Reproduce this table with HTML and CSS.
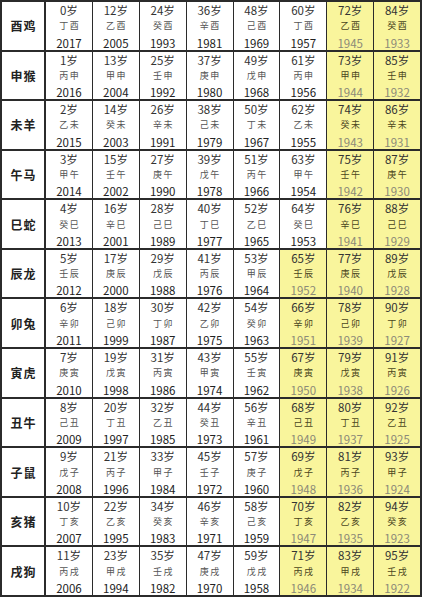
FILE: index.html
```html
<!DOCTYPE html>
<html lang="zh">
<head>
<meta charset="utf-8">
<link rel="stylesheet" href="styles.css">
</head>
<body>
<div class="table">
  <div class="lab">酉鸡</div>
  <div class="c"><span class="a">0岁</span><span class="g">丁酉</span><span class="y">2017</span></div>
  <div class="c"><span class="a">12岁</span><span class="g">乙酉</span><span class="y">2005</span></div>
  <div class="c"><span class="a">24岁</span><span class="g">癸酉</span><span class="y">1993</span></div>
  <div class="c"><span class="a">36岁</span><span class="g">辛酉</span><span class="y">1981</span></div>
  <div class="c"><span class="a">48岁</span><span class="g">己酉</span><span class="y">1969</span></div>
  <div class="c"><span class="a">60岁</span><span class="g">丁酉</span><span class="y">1957</span></div>
  <div class="c hl"><span class="a">72岁</span><span class="g">乙酉</span><span class="y">1945</span></div>
  <div class="c hl"><span class="a">84岁</span><span class="g">癸酉</span><span class="y">1933</span></div>

  <div class="lab">申猴</div>
  <div class="c"><span class="a">1岁</span><span class="g">丙申</span><span class="y">2016</span></div>
  <div class="c"><span class="a">13岁</span><span class="g">甲申</span><span class="y">2004</span></div>
  <div class="c"><span class="a">25岁</span><span class="g">壬申</span><span class="y">1992</span></div>
  <div class="c"><span class="a">37岁</span><span class="g">庚申</span><span class="y">1980</span></div>
  <div class="c"><span class="a">49岁</span><span class="g">戊申</span><span class="y">1968</span></div>
  <div class="c"><span class="a">61岁</span><span class="g">丙申</span><span class="y">1956</span></div>
  <div class="c hl"><span class="a">73岁</span><span class="g">甲申</span><span class="y">1944</span></div>
  <div class="c hl"><span class="a">85岁</span><span class="g">壬申</span><span class="y">1932</span></div>

  <div class="lab">未羊</div>
  <div class="c"><span class="a">2岁</span><span class="g">乙未</span><span class="y">2015</span></div>
  <div class="c"><span class="a">14岁</span><span class="g">癸未</span><span class="y">2003</span></div>
  <div class="c"><span class="a">26岁</span><span class="g">辛未</span><span class="y">1991</span></div>
  <div class="c"><span class="a">38岁</span><span class="g">己未</span><span class="y">1979</span></div>
  <div class="c"><span class="a">50岁</span><span class="g">丁未</span><span class="y">1967</span></div>
  <div class="c"><span class="a">62岁</span><span class="g">乙未</span><span class="y">1955</span></div>
  <div class="c hl"><span class="a">74岁</span><span class="g">癸未</span><span class="y">1943</span></div>
  <div class="c hl"><span class="a">86岁</span><span class="g">辛未</span><span class="y">1931</span></div>

  <div class="lab">午马</div>
  <div class="c"><span class="a">3岁</span><span class="g">甲午</span><span class="y">2014</span></div>
  <div class="c"><span class="a">15岁</span><span class="g">壬午</span><span class="y">2002</span></div>
  <div class="c"><span class="a">27岁</span><span class="g">庚午</span><span class="y">1990</span></div>
  <div class="c"><span class="a">39岁</span><span class="g">戊午</span><span class="y">1978</span></div>
  <div class="c"><span class="a">51岁</span><span class="g">丙午</span><span class="y">1966</span></div>
  <div class="c"><span class="a">63岁</span><span class="g">甲午</span><span class="y">1954</span></div>
  <div class="c hl"><span class="a">75岁</span><span class="g">壬午</span><span class="y">1942</span></div>
  <div class="c hl"><span class="a">87岁</span><span class="g">庚午</span><span class="y">1930</span></div>

  <div class="lab">巳蛇</div>
  <div class="c"><span class="a">4岁</span><span class="g">癸巳</span><span class="y">2013</span></div>
  <div class="c"><span class="a">16岁</span><span class="g">辛巳</span><span class="y">2001</span></div>
  <div class="c"><span class="a">28岁</span><span class="g">己巳</span><span class="y">1989</span></div>
  <div class="c"><span class="a">40岁</span><span class="g">丁巳</span><span class="y">1977</span></div>
  <div class="c"><span class="a">52岁</span><span class="g">乙巳</span><span class="y">1965</span></div>
  <div class="c"><span class="a">64岁</span><span class="g">癸巳</span><span class="y">1953</span></div>
  <div class="c hl"><span class="a">76岁</span><span class="g">辛巳</span><span class="y">1941</span></div>
  <div class="c hl"><span class="a">88岁</span><span class="g">己巳</span><span class="y">1929</span></div>

  <div class="lab">辰龙</div>
  <div class="c"><span class="a">5岁</span><span class="g">壬辰</span><span class="y">2012</span></div>
  <div class="c"><span class="a">17岁</span><span class="g">庚辰</span><span class="y">2000</span></div>
  <div class="c"><span class="a">29岁</span><span class="g">戊辰</span><span class="y">1988</span></div>
  <div class="c"><span class="a">41岁</span><span class="g">丙辰</span><span class="y">1976</span></div>
  <div class="c"><span class="a">53岁</span><span class="g">甲辰</span><span class="y">1964</span></div>
  <div class="c hl"><span class="a">65岁</span><span class="g">壬辰</span><span class="y">1952</span></div>
  <div class="c hl"><span class="a">77岁</span><span class="g">庚辰</span><span class="y">1940</span></div>
  <div class="c hl"><span class="a">89岁</span><span class="g">戊辰</span><span class="y">1928</span></div>

  <div class="lab">卯兔</div>
  <div class="c"><span class="a">6岁</span><span class="g">辛卯</span><span class="y">2011</span></div>
  <div class="c"><span class="a">18岁</span><span class="g">己卯</span><span class="y">1999</span></div>
  <div class="c"><span class="a">30岁</span><span class="g">丁卯</span><span class="y">1987</span></div>
  <div class="c"><span class="a">42岁</span><span class="g">乙卯</span><span class="y">1975</span></div>
  <div class="c"><span class="a">54岁</span><span class="g">癸卯</span><span class="y">1963</span></div>
  <div class="c hl"><span class="a">66岁</span><span class="g">辛卯</span><span class="y">1951</span></div>
  <div class="c hl"><span class="a">78岁</span><span class="g">己卯</span><span class="y">1939</span></div>
  <div class="c hl"><span class="a">90岁</span><span class="g">丁卯</span><span class="y">1927</span></div>

  <div class="lab">寅虎</div>
  <div class="c"><span class="a">7岁</span><span class="g">庚寅</span><span class="y">2010</span></div>
  <div class="c"><span class="a">19岁</span><span class="g">戊寅</span><span class="y">1998</span></div>
  <div class="c"><span class="a">31岁</span><span class="g">丙寅</span><span class="y">1986</span></div>
  <div class="c"><span class="a">43岁</span><span class="g">甲寅</span><span class="y">1974</span></div>
  <div class="c"><span class="a">55岁</span><span class="g">壬寅</span><span class="y">1962</span></div>
  <div class="c hl"><span class="a">67岁</span><span class="g">庚寅</span><span class="y">1950</span></div>
  <div class="c hl"><span class="a">79岁</span><span class="g">戊寅</span><span class="y">1938</span></div>
  <div class="c hl"><span class="a">91岁</span><span class="g">丙寅</span><span class="y">1926</span></div>

  <div class="lab">丑牛</div>
  <div class="c"><span class="a">8岁</span><span class="g">己丑</span><span class="y">2009</span></div>
  <div class="c"><span class="a">20岁</span><span class="g">丁丑</span><span class="y">1997</span></div>
  <div class="c"><span class="a">32岁</span><span class="g">乙丑</span><span class="y">1985</span></div>
  <div class="c"><span class="a">44岁</span><span class="g">癸丑</span><span class="y">1973</span></div>
  <div class="c"><span class="a">56岁</span><span class="g">辛丑</span><span class="y">1961</span></div>
  <div class="c hl"><span class="a">68岁</span><span class="g">己丑</span><span class="y">1949</span></div>
  <div class="c hl"><span class="a">80岁</span><span class="g">丁丑</span><span class="y">1937</span></div>
  <div class="c hl"><span class="a">92岁</span><span class="g">乙丑</span><span class="y">1925</span></div>

  <div class="lab">子鼠</div>
  <div class="c"><span class="a">9岁</span><span class="g">戊子</span><span class="y">2008</span></div>
  <div class="c"><span class="a">21岁</span><span class="g">丙子</span><span class="y">1996</span></div>
  <div class="c"><span class="a">33岁</span><span class="g">甲子</span><span class="y">1984</span></div>
  <div class="c"><span class="a">45岁</span><span class="g">壬子</span><span class="y">1972</span></div>
  <div class="c"><span class="a">57岁</span><span class="g">庚子</span><span class="y">1960</span></div>
  <div class="c hl"><span class="a">69岁</span><span class="g">戊子</span><span class="y">1948</span></div>
  <div class="c hl"><span class="a">81岁</span><span class="g">丙子</span><span class="y">1936</span></div>
  <div class="c hl"><span class="a">93岁</span><span class="g">甲子</span><span class="y">1924</span></div>

  <div class="lab">亥猪</div>
  <div class="c"><span class="a">10岁</span><span class="g">丁亥</span><span class="y">2007</span></div>
  <div class="c"><span class="a">22岁</span><span class="g">乙亥</span><span class="y">1995</span></div>
  <div class="c"><span class="a">34岁</span><span class="g">癸亥</span><span class="y">1983</span></div>
  <div class="c"><span class="a">46岁</span><span class="g">辛亥</span><span class="y">1971</span></div>
  <div class="c"><span class="a">58岁</span><span class="g">己亥</span><span class="y">1959</span></div>
  <div class="c hl"><span class="a">70岁</span><span class="g">丁亥</span><span class="y">1947</span></div>
  <div class="c hl"><span class="a">82岁</span><span class="g">乙亥</span><span class="y">1935</span></div>
  <div class="c hl"><span class="a">94岁</span><span class="g">癸亥</span><span class="y">1923</span></div>

  <div class="lab">戌狗</div>
  <div class="c"><span class="a">11岁</span><span class="g">丙戌</span><span class="y">2006</span></div>
  <div class="c"><span class="a">23岁</span><span class="g">甲戌</span><span class="y">1994</span></div>
  <div class="c"><span class="a">35岁</span><span class="g">壬戌</span><span class="y">1982</span></div>
  <div class="c"><span class="a">47岁</span><span class="g">庚戌</span><span class="y">1970</span></div>
  <div class="c"><span class="a">59岁</span><span class="g">戊戌</span><span class="y">1958</span></div>
  <div class="c hl"><span class="a">71岁</span><span class="g">丙戌</span><span class="y">1946</span></div>
  <div class="c hl"><span class="a">83岁</span><span class="g">甲戌</span><span class="y">1934</span></div>
  <div class="c hl"><span class="a">95岁</span><span class="g">壬戌</span><span class="y">1922</span></div>
</div>
</body>
</html>
```

FILE: styles.css
```css
html, body {
  margin: 0;
  padding: 0;
  background: #ffffff;
}

body {
  width: 425px;
  height: 600px;
  overflow: hidden;
  font-family: "Noto Sans CJK SC", "Noto Sans", sans-serif;
}

.table {
  width: 422px;
  height: 597px;
  box-sizing: border-box;
  padding: 2px;
  background: #2b2b2b;
  display: grid;
  grid-template-columns: 43px repeat(8, 1fr);
  grid-template-rows: repeat(12, 1fr);
  column-gap: 1px;
  row-gap: 2px;
}

.lab {
  background: #ffffff;
  display: flex;
  align-items: center;
  justify-content: center;
  font-size: 12px;
  font-weight: 700;
  color: #222222;
  letter-spacing: 1px;
  padding-left: 1px;
  margin-right: 1px;
}

.c {
  background: #ffffff;
  display: flex;
  flex-direction: column;
  align-items: center;
  justify-content: space-between;
  padding: 1px 0 0;
  overflow: hidden;
}

.c.hl {
  background: #f9f59c;
}

.a {
  font-size: 11.5px;
  line-height: 14px;
  color: #333333;
}

.g {
  font-size: 9px;
  line-height: 12px;
  color: #555555;
  letter-spacing: 1.5px;
  padding-left: 1.5px;
}

.y {
  font-size: 11.5px;
  line-height: 14px;
  color: #222222;
}

.hl .y {
  color: #8c8a78;
}

.hl .g {
  color: #4a4520;
}
```
